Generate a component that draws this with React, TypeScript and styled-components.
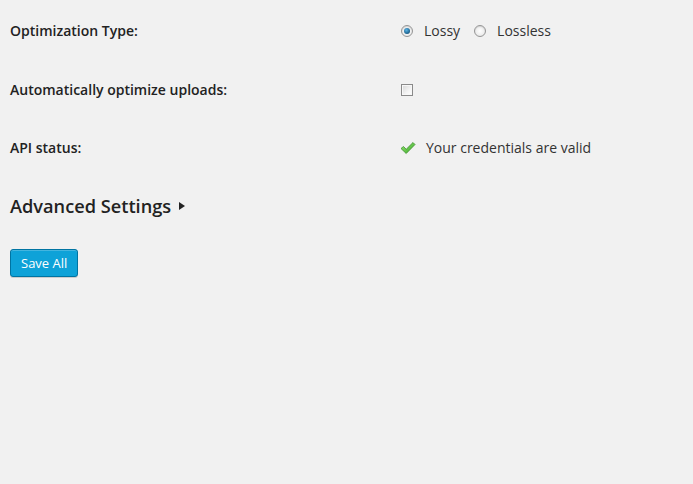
import React from 'react';
import styled, { createGlobalStyle } from 'styled-components';

const GlobalStyle = createGlobalStyle`
  html, body {
    margin: 0;
    padding: 0;
    background: #f1f1f1;
  }
  body {
    font-family: "Open Sans", "Liberation Sans", sans-serif;
    color: #444;
    font-size: 14px;
  }
`;

const Page = styled.div`
  padding: 2px 10px 0 10px;
  min-height: 484px;
  box-sizing: border-box;
`;

const FormTable = styled.div`
  display: grid;
  grid-template-columns: 390px 1fr;
`;

const Label = styled.div`
  padding: 20px 10px 20px 0;
  font-weight: 600;
  color: #222;
  line-height: 18.5px;
`;

const Field = styled.div`
  padding: 20px 0;
  display: flex;
  align-items: center;
  line-height: 18.5px;
  height: 18.5px;
  color: #333;
`;

const Option = styled.label`
  display: inline-flex;
  align-items: center;
  margin-right: 13px;
`;

const Radio = styled.span<{ $checked?: boolean }>`
  width: 10px;
  height: 10px;
  border-radius: 50%;
  border: 1px solid #959595;
  background: radial-gradient(circle at 50% 50%, #fff 0%, #e2e2e2 100%);
  margin: 0 11px 0 1px;
  position: relative;
  box-shadow: inset 0 1px 1px rgba(0, 0, 0, 0.1);

  ${(p) =>
    p.$checked &&
    `
    &::after {
      content: '';
      position: absolute;
      left: 2px;
      top: 2px;
      width: 6px;
      height: 6px;
      border-radius: 50%;
      background: radial-gradient(circle at 40% 35%, #5ab4e6 0%, #1a5f8a 70%, #0e3550 100%);
    }
  `}
`;

const Checkbox = styled.span`
  width: 10px;
  height: 10px;
  margin-left: 1px;
  border: 1px solid #8a8a8a;
  background: linear-gradient(135deg, #d6d6d6 0%, #f3f3f3 60%, #ffffff 100%);
  box-shadow: inset 0 0 0 1px #f7f7f7;
`;

const Status = styled.span`
  display: inline-flex;
  align-items: center;
  gap: 10px;
`;

const SectionTitle = styled.h2`
  margin: 17px 0 0 0;
  font-size: 18.2px;
  font-weight: 600;
  color: #222;
  line-height: 23px;
  display: flex;
  align-items: center;
`;

const Arrow = styled.span`
  width: 0;
  height: 0;
  margin-left: 8px;
  border-top: 4px solid transparent;
  border-bottom: 4px solid transparent;
  border-left: 6px solid #222;
`;

const SaveButton = styled.button`
  margin-top: 31px;
  height: 28px;
  padding: 0 10px;
  font-family: "Open Sans", "Liberation Sans", sans-serif;
  font-size: 13px;
  line-height: 26px;
  color: #fff;
  background: #0ea2d8;
  border: 1px solid #0074a2;
  border-radius: 3px;
  box-shadow: inset 0 1px 0 rgba(120, 200, 230, 0.5), 0 1px 0 rgba(0, 0, 0, 0.15);
  cursor: pointer;
`;

const CheckIcon = () => (
  <svg width="16" height="14" viewBox="0 0 16 14">
    <defs>
      <linearGradient id="chk" x1="0" y1="0" x2="1" y2="1">
        <stop offset="0" stopColor="#9be878" />
        <stop offset="1" stopColor="#34a622" />
      </linearGradient>
    </defs>
    <path
      d="M1 7.5 L3.5 5.5 L6.2 8.3 L13 1.5 L15 3.5 L6.2 12.5 Z"
      fill="url(#chk)"
      stroke="#3f8f2e"
      strokeWidth="0.8"
      strokeLinejoin="round"
    />
  </svg>
);

export default function App() {
  return (
    <>
      <GlobalStyle />
      <Page>
        <FormTable>
          <Label>Optimization Type:</Label>
          <Field>
            <Option>
              <Radio $checked />
              Lossy
            </Option>
            <Option>
              <Radio />
              Lossless
            </Option>
          </Field>

          <Label>Automatically optimize uploads:</Label>
          <Field>
            <Checkbox />
          </Field>

          <Label>API status:</Label>
          <Field>
            <Status>
              <CheckIcon />
              Your credentials are valid
            </Status>
          </Field>
        </FormTable>

        <SectionTitle>
          Advanced Settings
          <Arrow />
        </SectionTitle>

        <SaveButton>Save All</SaveButton>
      </Page>
    </>
  );
}
